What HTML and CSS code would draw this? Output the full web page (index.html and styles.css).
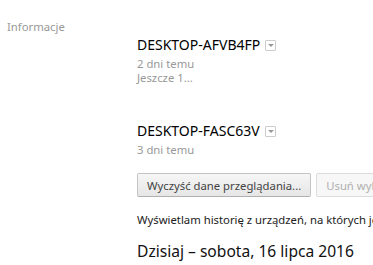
FILE: index.html
```html
<!DOCTYPE html>
<html lang="pl">
<head>
    <meta charset="UTF-8">
    <title>Historia</title>
    <link rel="stylesheet" href="styles.css">
</head>
<body>
<div class="page">
    <div class="side">
        <div class="side-item">Informacje</div>
    </div>
    <div class="main">
        <div class="device">
            <div class="device-name">DESKTOP-AFVB4FP <span class="drop"></span></div>
            <div class="device-time">2 dni temu</div>
            <div class="device-tab">Jeszcze 1...</div>
        </div>
        <div class="device device-last">
            <div class="device-name">DESKTOP-FASC63V <span class="drop"></span></div>
            <div class="device-time">3 dni temu</div>
        </div>
        <div class="buttons">
            <button class="btn">Wyczyść dane przeglądania...</button>
            <button class="btn" disabled>Usuń wybrane elementy</button>
        </div>
        <p class="info">Wyświetlam historię z urządzeń, na których jesteś zalogowany.</p>
        <h2 class="day">Dzisiaj – sobota, 16 lipca 2016</h2>
    </div>
</div>
</body>
</html>
```

FILE: styles.css
```css
* {
    margin: 0;
    padding: 0;
}
body {
    font-family: "Noto Sans", sans-serif;
    font-size: 11.3px;
    color: #303030;
    background: #fff;
    overflow: hidden;
}
.page {
    display: flex;
    width: 600px;
}
.side {
    width: 130px;
    padding: 19px 0 0 7px;
}
.side-item {
    color: #999;
    line-height: 16px;
}
.main {
    flex: 1;
    padding-top: 36px;
}
.device {
    margin-bottom: 37px;
}
.device-last {
    margin-bottom: 16px;
}
.device-name {
    font-size: 14px;
    line-height: 18px;
    color: #000;
    display: flex;
    align-items: center;
}
.drop {
    display: inline-block;
    width: 9px;
    height: 9px;
    margin-left: 5px;
    border: 1px solid #ccc;
    border-radius: 1px;
    position: relative;
}
.drop::after {
    content: "";
    position: absolute;
    left: 2px;
    top: 3px;
    border-left: 3px solid transparent;
    border-right: 3px solid transparent;
    border-top: 3px solid #999;
}
.device-time,
.device-tab {
    color: #999;
    line-height: 14px;
}
.device-time {
    margin-top: 3px;
}
.buttons {
    display: flex;
    gap: 5px;
}
.btn {
    font-family: inherit;
    font-size: 11.3px;
    color: #444;
    height: 24px;
    padding: 0 9px;
    border: 1px solid #c4c4c4;
    border-bottom-color: #b0b0b0;
    border-radius: 2px;
    background: linear-gradient(#f6f6f6, #e6e6e6);
    white-space: nowrap;
}
.btn:disabled {
    color: #b0b0b0;
    border-color: #dcdcdc;
    background: #f7f7f7;
}
.info {
    margin-top: 15px;
    line-height: 16px;
    color: #222;
    white-space: nowrap;
}
.day {
    margin-top: 12px;
    font-size: 15.6px;
    font-weight: normal;
    color: #111;
    white-space: nowrap;
}
```
